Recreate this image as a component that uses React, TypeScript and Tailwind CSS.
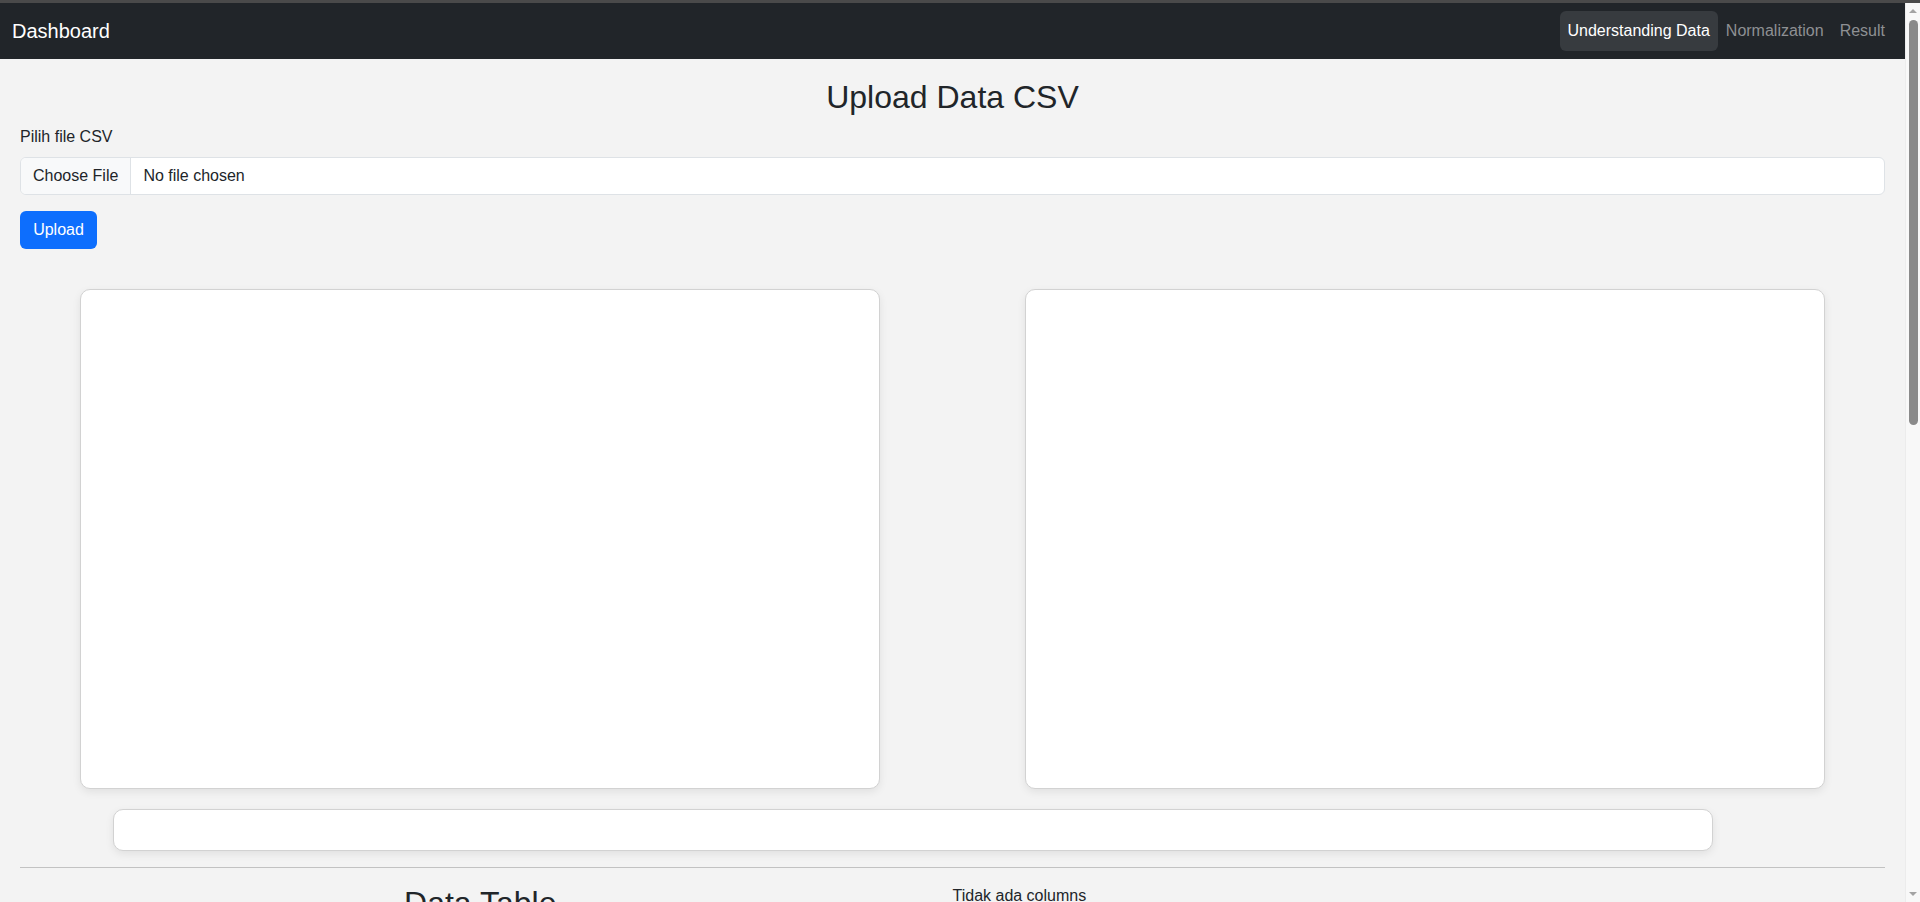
import React from "react";

export default function App() {
  return (
    <div
      className="h-screen w-full overflow-hidden flex flex-col bg-[#f3f3f3] text-[#212529]"
      style={{ fontFamily: '"Liberation Sans", Arial, sans-serif' }}
    >
      <div className="h-[3px] w-full bg-[#4a4a4a] shrink-0" />
      <div className="flex flex-1 min-h-0">
        <div className="flex-1 min-w-0 overflow-hidden">
          {/* Navbar */}
          <nav className="h-[56px] bg-[#212529] flex items-center justify-between px-[12px]">
            <span className="text-[20px] leading-[30px] text-white">Dashboard</span>
            <div className="flex items-center">
              <span className="h-[40px] px-[8px] flex items-center text-[16px] text-white bg-[#373b3f] rounded-[6px]">
                Understanding Data
              </span>
              <span className="h-[40px] px-[8px] flex items-center text-[16px] text-[#8e9093]">
                Normalization
              </span>
              <span className="h-[40px] px-[8px] flex items-center text-[16px] text-[#8e9093]">
                Result
              </span>
            </div>
          </nav>

          <div className="px-[20px]">
            <h2 className="mt-[19px] text-center text-[32px] leading-[38px] font-normal">
              Upload Data CSV
            </h2>
            <div className="mt-[9px] text-[16px] leading-[24px]">Pilih file CSV</div>
            <div className="mt-[8px] h-[38px] flex bg-white border border-[#dee2e6] rounded-[6px] overflow-hidden text-[16px]">
              <div className="px-[12px] flex items-center bg-[#f8f9fa] border-r border-[#dee2e6]">
                Choose File
              </div>
              <div className="px-[12px] flex items-center">No file chosen</div>
            </div>
            <div className="mt-[16px]">
              <span className="inline-flex items-center justify-center w-[77px] h-[38px] bg-[#0d6efd] text-white text-[16px] rounded-[6px]">
                Upload
              </span>
            </div>

            <div className="mt-[40px] flex justify-between px-[60px]">
              <div className="w-[800px] h-[500px] bg-white border border-[#d2d2d2] rounded-[10px] shadow-[0_3px_8px_rgba(0,0,0,0.08)]" />
              <div className="w-[800px] h-[500px] bg-white border border-[#d2d2d2] rounded-[10px] shadow-[0_3px_8px_rgba(0,0,0,0.08)]" />
            </div>

            <div className="mt-[20px] ml-[93px] w-[1600px] h-[42px] bg-white border border-[#d2d2d2] rounded-[10px] shadow-[0_3px_8px_rgba(0,0,0,0.08)]" />

            <div className="mt-[16px] h-px bg-[#c2c2c2]" />

            <div className="mt-[16px] grid grid-cols-2">
              <h2 className="pr-[12px] text-center text-[32px] leading-[38px] font-normal">Data Table</h2>
              <div className="text-[16px] leading-[24px]">Tidak ada columns</div>
            </div>
          </div>
        </div>

        {/* Scrollbar */}
        <div className="w-[15px] shrink-0 bg-[#f8f8f8] border-l border-[#ececec] flex flex-col items-center">
          <div className="mt-[6px] w-0 h-0 border-l-[4px] border-r-[4px] border-b-[4px] border-l-transparent border-r-transparent border-b-[#a3a3a3]" />
          <div className="mt-[7px] w-[9px] h-[405px] rounded-full bg-[#8a8a8a]" />
          <div className="flex-1" />
          <div className="mb-[6px] w-0 h-0 border-l-[4px] border-r-[4px] border-t-[4px] border-l-transparent border-r-transparent border-t-[#a3a3a3]" />
        </div>
      </div>
    </div>
  );
}
